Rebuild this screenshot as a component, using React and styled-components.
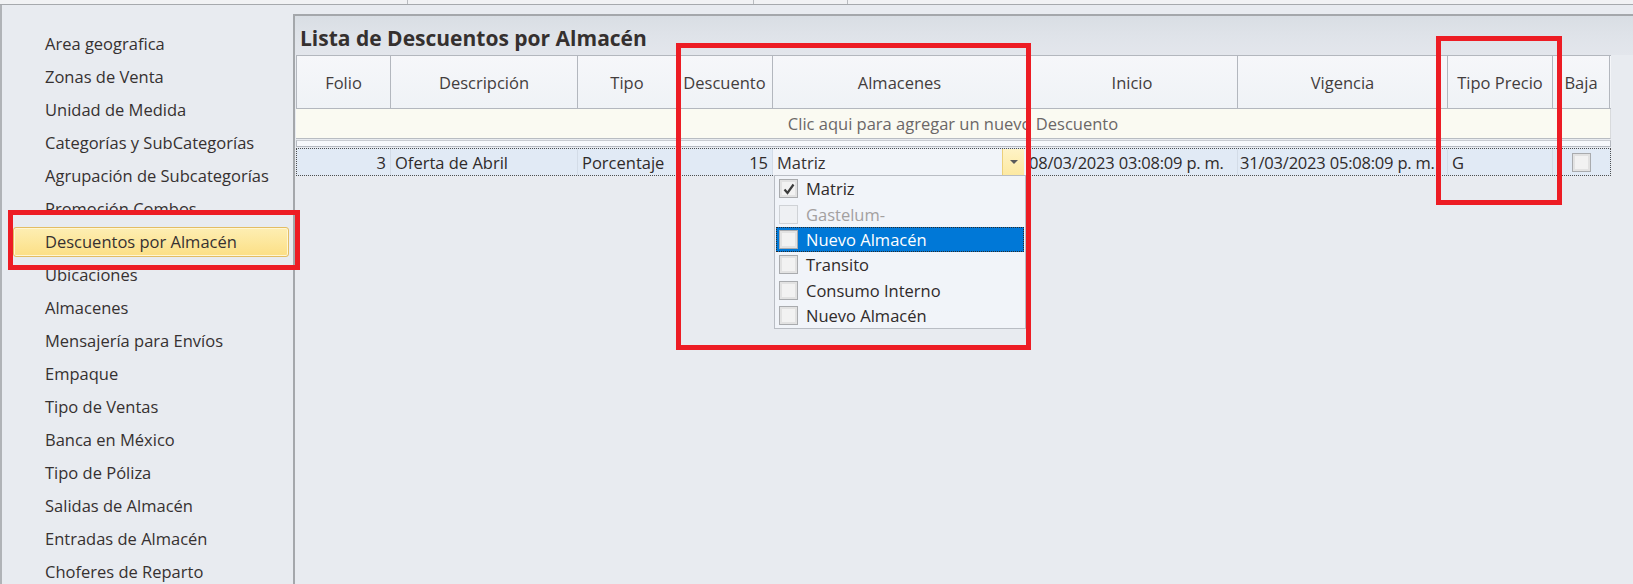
import styled, { createGlobalStyle, css } from 'styled-components';

const GlobalStyle = createGlobalStyle`
  *, *::before, *::after { box-sizing: border-box; }
  body {
    margin: 0;
    font-family: 'Open Sans', 'Noto Sans', sans-serif;
    font-size: 16.5px;
    color: #363131;
  }
`;

const Page = styled.div`
  position: relative;
  width: 1633px;
  height: 584px;
  overflow: hidden;
  background: #e8ebf0;
  display: flex;
  flex-direction: column;
`;

const TopStrip = styled.div`
  flex: none;
  height: 5px;
  background: #f1f2f4;
  border-bottom: 1px solid #a6a9ad;
  display: flex;
`;

const TopTab = styled.div`
  width: ${p => p.w}px;
  border-right: 1px solid #b9bcc0;
`;

const Main = styled.div`
  flex: 1;
  min-height: 0;
  overflow: hidden;
  display: flex;
  border-left: 2px solid #b0b3b7;
`;

const Sidebar = styled.div`
  flex: none;
  width: 291px;
  padding-top: 24px;
  display: flex;
  flex-direction: column;
`;

const NavItem = styled.div`
  flex: none;
  margin: 0 0 3px 11px;
  width: 276px;
  height: 30px;
  padding-left: 31px;
  line-height: 28px;
  border: 1px solid transparent;
  border-radius: 3px;
  white-space: nowrap;
  ${p => p.active && css`
    background: linear-gradient(#fdeeb3, #fcdf85);
    border-color: #e3bd63;
    box-shadow: inset 0 0 0 1px #fff6d4;
  `}
`;

const Panel = styled.div`
  flex: 1;
  margin-top: 9px;
  border-top: 2px solid #a4a7ab;
  border-left: 2px solid #a4a7ab;
  display: flex;
  flex-direction: column;
`;

const TitleBar = styled.div`
  flex: none;
  height: 39px;
  padding-left: 5px;
  display: flex;
  align-items: flex-end;
  background: linear-gradient(#d9dee4 0%, #dfe3e9 50%, #e3e6ec 100%);
`;

const Title = styled.div`
  font-size: 21px;
  font-weight: 700;
  line-height: 28px;
  color: #35302f;
  padding-bottom: 3px;
`;

const Table = styled.div`
  position: relative;
  margin-left: 1px;
  width: 1315px;
`;

const cols = '94px 187px 99px 96px 254px 211px 210px 105px 57px';

const HeaderRow = styled.div`
  display: grid;
  grid-template-columns: ${cols};
  height: 54px;
  border: 1px solid #b3b7be;
  border-right: 0;
  background: linear-gradient(#f6f7fa, #eff2f6);
`;

const HeadCell = styled.div`
  display: flex;
  align-items: center;
  justify-content: center;
  border-right: 1px solid #b3b7be;
  color: #433d3d;
`;

const AddRow = styled.div`
  height: 30px;
  line-height: 29px;
  text-align: center;
  background: #fafaf2;
  border-bottom: 1px solid #b8bcc2;
  border-right: 1px solid #d8dadc;
  color: #6b6767;
`;

const SepStrip = styled.div`
  height: 7px;
  margin-top: 1px;
  background: #f6f8fb;
  border: 1px solid #b5b9c0;
  border-top-color: #c9ccd1;
`;

const DataRow = styled.div`
  display: grid;
  grid-template-columns: ${cols};
  height: 28px;
  margin-top: 1px;
  border: 1px dotted #4e4e4e;
  background: #e1eaf5;
`;

const Cell = styled.div`
  display: flex;
  align-items: center;
  padding: 0 ${p => (p.tight ? 2 : 4)}px;
  white-space: nowrap;
  overflow: hidden;
  justify-content: ${p => (p.right ? 'flex-end' : p.center ? 'center' : 'flex-start')};
  border-right: 1px solid #d3dce7;
  color: #2f2a2a;
  letter-spacing: ${p => (p.tight ? '-0.2px' : 'normal')};
  &:last-child { border-right: 0; }
`;

const EditCell = styled.div`
  position: relative;
  display: flex;
  align-items: center;
  padding-left: 4px;
  background: #f1f4f9;
  border-right: 1px solid #d3dce7;
`;

const DropButton = styled.div`
  position: absolute;
  right: 2px;
  top: 0;
  bottom: 0;
  width: 22px;
  background: linear-gradient(#fef3c6, #fde9a2);
  border-left: 1px solid #ecd07a;
  display: flex;
  align-items: center;
  justify-content: center;
  &::after {
    content: '';
    border-left: 4px solid transparent;
    border-right: 4px solid transparent;
    border-top: 4px solid #5a5a5a;
  }
`;

const DropList = styled.div`
  position: absolute;
  left: 478px;
  top: 120px;
  width: 252px;
  padding: 0 1px;
  background: #f1f4f9;
  border: 1px solid #b9bdc4;
  z-index: 2;
`;

const DropItem = styled.div`
  height: 25.4px;
  display: flex;
  align-items: center;
  gap: 8px;
  padding-left: 3px;
  white-space: nowrap;
  color: ${p => (p.disabled ? '#a3a0a0' : p.selected ? '#ffffff' : '#2f2a2a')};
  ${p => p.selected && css`
    background: #0078d7;
    outline: 1px dotted #2b2b2b;
    outline-offset: -1px;
  `}
`;

const Box = styled.span`
  width: 19px;
  height: 19px;
  flex: none;
  border: 1px solid ${p => (p.disabled ? '#cfd2d6' : '#a9abae')};
  background: ${p => (p.disabled ? '#eef0f3' : '#f2f2f2')};
  box-shadow: inset 0 0 0 2px ${p => (p.disabled ? '#eef0f3' : '#e2e2e2')};
  display: flex;
  align-items: center;
  justify-content: center;
`;

const Annotation = styled.div`
  position: absolute;
  border: 5px solid #ed1c24;
  pointer-events: none;
  z-index: 5;
`;

const navItems = [
  'Area geografica',
  'Zonas de Venta',
  'Unidad de Medida',
  'Categorías y SubCategorías',
  'Agrupación de Subcategorías',
  'Promoción Combos',
  'Descuentos por Almacén',
  'Ubicaciones',
  'Almacenes',
  'Mensajería para Envíos',
  'Empaque',
  'Tipo de Ventas',
  'Banca en México',
  'Tipo de Póliza',
  'Salidas de Almacén',
  'Entradas de Almacén',
  'Choferes de Reparto',
];

const headers = ['Folio', 'Descripción', 'Tipo', 'Descuento', 'Almacenes', 'Inicio', 'Vigencia', 'Tipo Precio', 'Baja'];

const almacenes = [
  { name: 'Matriz', checked: true },
  { name: 'Gastelum-', disabled: true },
  { name: 'Nuevo Almacén', selected: true },
  { name: 'Transito' },
  { name: 'Consumo Interno' },
  { name: 'Nuevo Almacén' },
];

const Check = () => (
  <svg width="14" height="14" viewBox="0 0 14 14">
    <path d="M2.5 7.5 L5.5 11 L11.5 2.5" fill="none" stroke="#3c3c3c" strokeWidth="2.2" />
  </svg>
);

export default function App() {
  return (
    <Page>
      <GlobalStyle />
      <TopStrip>
        <TopTab w={408} />
        <TopTab w={346} />
        <TopTab w={94} />
      </TopStrip>
      <Main>
        <Sidebar>
          {navItems.map((item, i) => (
            <NavItem key={i} active={i === 6}>{item}</NavItem>
          ))}
        </Sidebar>
        <Panel>
          <TitleBar>
            <Title>Lista de Descuentos por Almacén</Title>
          </TitleBar>
          <Table>
            <HeaderRow>
              {headers.map(h => <HeadCell key={h}>{h}</HeadCell>)}
            </HeaderRow>
            <AddRow>Clic aqui para agregar un nuevo Descuento</AddRow>
            <SepStrip />
            <DataRow>
              <Cell right>3</Cell>
              <Cell>Oferta de Abril</Cell>
              <Cell>Porcentaje</Cell>
              <Cell right>15</Cell>
              <EditCell>
                Matriz
                <DropButton />
              </EditCell>
              <Cell tight>08/03/2023 03:08:09 p. m.</Cell>
              <Cell tight>31/03/2023 05:08:09 p. m.</Cell>
              <Cell>G</Cell>
              <Cell center><Box /></Cell>
            </DataRow>
            <DropList>
              {almacenes.map((a, i) => (
                <DropItem key={i} disabled={a.disabled} selected={a.selected}>
                  <Box disabled={a.disabled}>{a.checked && <Check />}</Box>
                  {a.name}
                </DropItem>
              ))}
            </DropList>
          </Table>
        </Panel>
      </Main>
      <Annotation style={{ left: 8, top: 210, width: 292, height: 60 }} />
      <Annotation style={{ left: 676, top: 43, width: 355, height: 307 }} />
      <Annotation style={{ left: 1436, top: 36, width: 126, height: 169 }} />
    </Page>
  );
}
